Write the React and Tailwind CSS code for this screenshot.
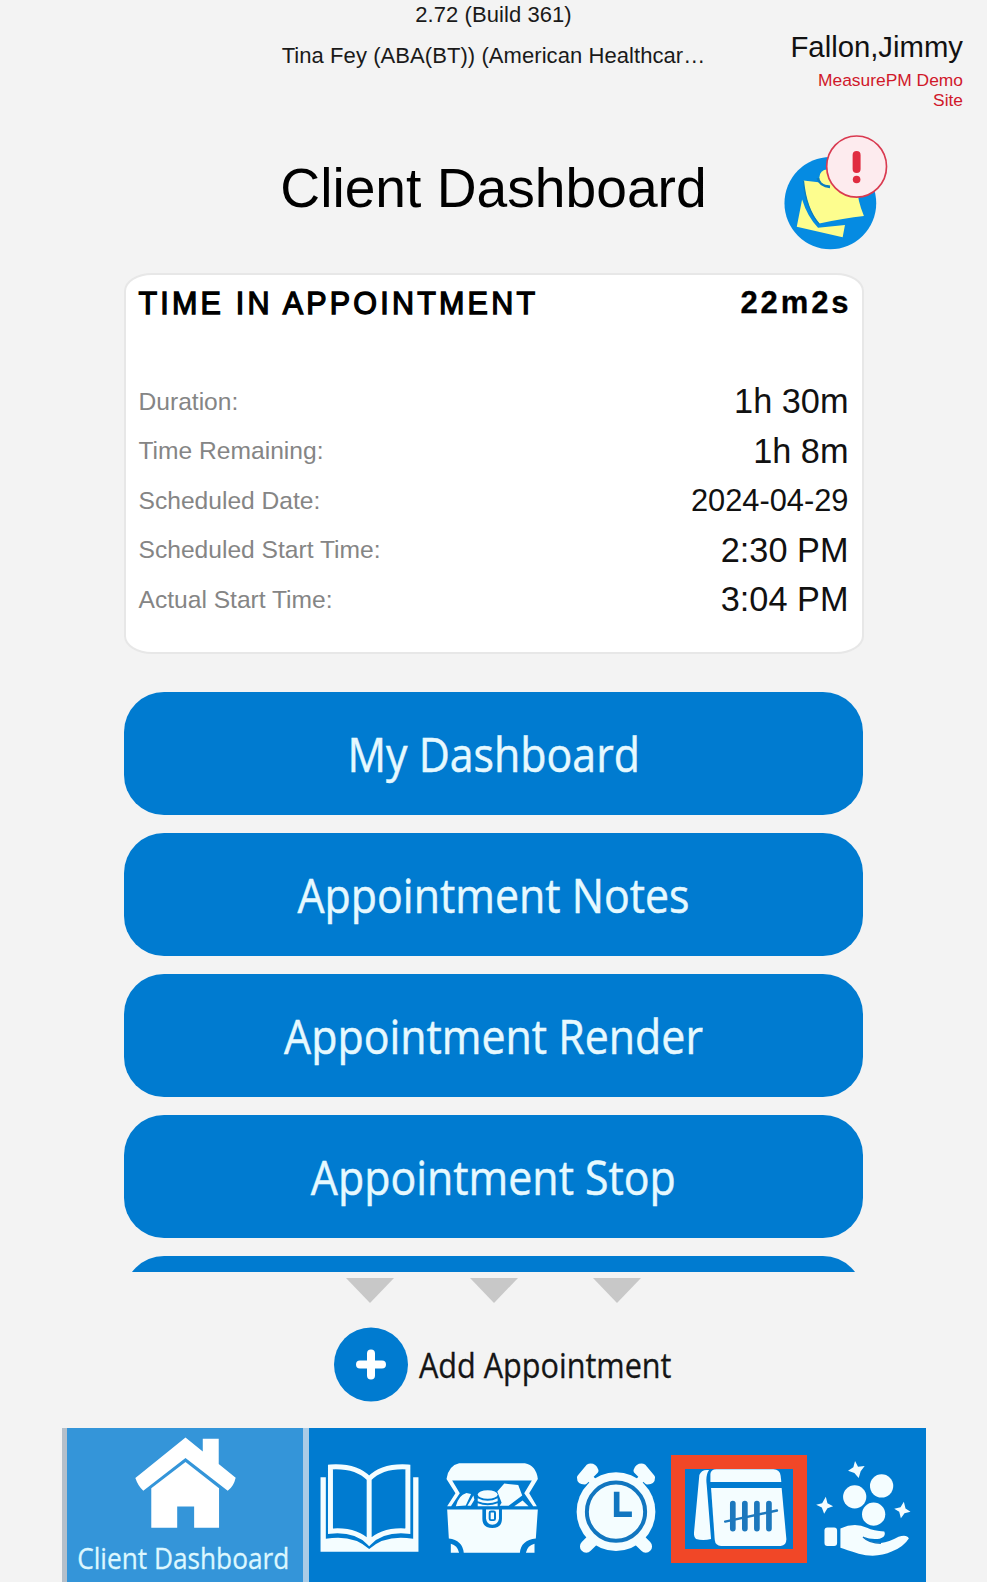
const details = [
  { label: 'Duration:', value: '1h 30m' },
  { label: 'Time Remaining:', value: '1h 8m' },
  { label: 'Scheduled Date:', value: '2024-04-29', small: true },
  { label: 'Scheduled Start Time:', value: '2:30 PM' },
  { label: 'Actual Start Time:', value: '3:04 PM' },
];

const actions = ['My Dashboard', 'Appointment Notes', 'Appointment Render', 'Appointment Stop', ''];

function NotesIcon() {
  return (
    <svg viewBox="70 404 312 346" className="w-[104px] h-[115px]">
      <ellipse cx="209" cy="609" rx="138" ry="139" fill="#058be2" />
      <path d="M124 598 L108 680 L246 712 L253 675 L172 683 Q140 650 124 598Z" fill="#fdfd8e" />
      <path d="M128 541 L290 560 Q290 600 310 648 Q250 655 176 670 Q136 625 128 541Z" fill="#fdfd8e" />
      <path d="M128 541 Q136 628 176 673" fill="none" stroke="#0a7dc0" strokeWidth="4" />
      <path d="M171 534 Q178 558 208 560" fill="none" stroke="#0a7dc0" strokeWidth="8" />
      <circle cx="199" cy="531" r="23" fill="#fdfd8e" />
      <ellipse cx="288" cy="499" rx="90" ry="92" fill="#fdebee" stroke="#d93a50" strokeWidth="5" />
      <rect x="276" y="452" width="24" height="66" rx="12" fill="#e02c40" />
      <circle cx="288" cy="538" r="11.5" fill="#e02c40" />
    </svg>
  );
}

function HouseIcon() {
  return (
    <svg viewBox="252 66 304 276" className="w-[101px] h-[92px]" fill="#fff">
      <path d="M404 67 L456 109 V71 H504 V147 L555 188 Q549 215 531 227 L404 129 L277 227 Q262 215 253 189Z" />
      <path d="M404 141 L505 220 V339 H430 V275 H379 V339 H301 V220Z" />
    </svg>
  );
}

function BookIcon() {
  return (
    <svg viewBox="61 146 298 266" className="w-[99px] h-[88px]">
      <path d="M62 186 H78 V372 Q160 358 209 403 Q258 358 342 372 V186 H358 V411 H62Z" fill="#f4fdff" />
      <path
        d="M92 155 Q170 150 209 191 Q248 150 326 155 V349 Q250 342 209 384 Q168 342 92 349Z M209 191 V384"
        fill="none" stroke="#f4fdff" strokeWidth="15"
      />
    </svg>
  );
}

function ChestIcon() {
  return (
    <svg viewBox="441 142 276 271" className="w-[92px] h-[90px]" fill="#f4fdff">
      <path d="M480 143 H678 Q712 150 717 190 L691 233 L714 272 H703 L676 233 L699 195 H459 L482 233 L456 272 H444 L469 233 L442 190 Q448 150 480 143Z" />
      <path d="M470 272 Q478 239 502 232 L516 235 L500 270Z M505 271 L523 240 L526 253 L515 271Z" />
      <ellipse cx="566" cy="237" rx="30" ry="13" />
      <path d="M536 248 Q566 264 596 248 V257 Q566 270 536 257Z M536 263 Q566 276 596 263 V272 H536Z" />
      <path d="M595 228 L616 204 L658 208 L670 240 L629 271 H602 L608 262Z M646 272 L671 255 L689 272Z" />
      <path d="M444 282 H550 V310 Q550 337 580 338 Q609 337 609 310 V282 H717 L711 369 Q666 374 663 412 H494 Q490 374 449 369Z" />
      <path d="M561 282 H600 V309 Q598 327 580 328 Q563 327 561 309Z" />
      <rect x="572" y="288" width="16" height="26" rx="4" fill="none" stroke="#007bd0" strokeWidth="6" />
      <path d="M455 385 Q475 390 480 412 H455Z M707 385 Q686 390 681 412 H707Z" />
    </svg>
  );
}

function ClockIcon() {
  return (
    <svg viewBox="80 142 240 272" className="w-[80px] h-[90px]">
      <path d="M134 370 L110 394 M266 370 L290 394" stroke="#f4fdff" strokeWidth="38" strokeLinecap="round" />
      <path d="M110 176 L146 214 M290 176 L254 214" stroke="#f4fdff" strokeWidth="22" />
      <path
        d="M92 186 L119 154 Q132 152 137 165 L105 197 Q92 197 92 186Z M308 186 L281 154 Q268 152 263 165 L295 197 Q308 197 308 186Z"
        fill="#f4fdff" stroke="#f4fdff" strokeWidth="20" strokeLinejoin="round"
      />
      <circle cx="200" cy="289" r="119" fill="#f4fdff" />
      <circle cx="200" cy="289" r="88" fill="none" stroke="#1176c0" strokeWidth="12" />
      <path d="M202 229 V297 H248" fill="none" stroke="#1176c0" strokeWidth="17" />
    </svg>
  );
}

function CalendarIcon() {
  return (
    <svg viewBox="433 162 278 230" className="w-[93px] h-[77px]">
      <path d="M449 180 Q455 162 478 165 Q467 180 471 210 L484 371 Q460 377 439 371 Q432 366 433 352Z" fill="#f4fdff" />
      <path d="M482 201 V177 Q483 163 500 163 H670 Q690 164 692 182 L694 201Z" fill="#f4fdff" />
      <path d="M484 219 H695 L709 370 Q710 391 692 392 H514 Q497 391 495 374Z" fill="#f4fdff" />
      <g stroke="#1c78bd" strokeLinecap="round">
        <path d="M549 265 V340 M585 265 V340 M621 265 V340 M657 265 V340" strokeWidth="17" />
        <path d="M526 319 L681 286" strokeWidth="7" />
      </g>
    </svg>
  );
}

function RewardsIcon() {
  return (
    <svg viewBox="229 136 285 286" className="w-[95px] h-[95px]" fill="#f4fdff">
      <circle cx="426" cy="211" r="35" />
      <circle cx="345" cy="244" r="35" />
      <circle cx="402" cy="296" r="35" />
      <path d="M346 136 L355 153 L375 151 L363 167 L357 187 L344 172 L325 165 L341 155Z" />
      <path d="M258 244 L263 263 L280 272 L263 278 L253 295 L246 276 L229 268 L247 263Z" />
      <path d="M493 259 L498 279 L513 289 L495 293 L484 308 L479 289 L464 280 L483 275Z" />
      <rect x="254" y="336" width="38" height="56" rx="9" />
      <path d="M302 339 Q345 320 382 337 Q402 347 434 348 Q441 364 420 370 Q395 374 371 364 Q389 383 424 383 Q448 380 477 364 Q502 356 508 369 Q493 393 458 408 Q410 430 357 415 Q318 403 302 397Z" />
      <path d="M370 365 Q389 384 424 384" fill="none" stroke="#1176c0" strokeWidth="4" />
    </svg>
  );
}

function Header() {
  return (
    <header className="grid grid-cols-[1fr_440px_1fr] h-[120px]">
      <div />
      <div className="text-center text-[22px] leading-[30px] tracking-[0.07px] text-[#1a1a1a] whitespace-nowrap">
        <p>2.72 (Build 361)</p>
        <p className="mt-[11px]">Tina Fey (ABA(BT)) (American Healthcar…</p>
      </div>
      <div className="flex flex-col items-end pt-[29px] pr-6 text-right">
        <p className="text-[29.3px] leading-9 text-[#111]">Fallon,Jimmy</p>
        <p className="mt-[5px] w-[150px] text-[17.4px] leading-5 text-[#d0182a]">MeasurePM Demo Site</p>
      </div>
    </header>
  );
}

function AppointmentCard() {
  return (
    <section className="mx-auto w-[740px] h-[381px] shrink-0 bg-white border-2 border-[#e7e7e7] rounded-[28px/18px] px-[13px] pt-2">
      <div className="flex justify-between leading-10 text-black">
        <h2 className="text-[30.5px] tracking-[3.2px] [-webkit-text-stroke:1.3px_black]">TIME IN APPOINTMENT</h2>
        <span className="text-[31px] font-bold tracking-[2.9px] -mr-[3px] [-webkit-text-stroke:0.3px_black]">22m2s</span>
      </div>
      <div className="mt-[54px]">
        {details.map(({ label, value, small }) => (
          <div key={label} className="flex items-center justify-between h-[49.5px]">
            <span className="pt-px text-[24.6px] text-[#858585]">{label}</span>
            <span className={small ? 'text-[30.8px] text-[#111]' : 'text-[34.3px] text-[#111]'}>{value}</span>
          </div>
        ))}
      </div>
    </section>
  );
}

export default function App() {
  return (
    <div className="flex flex-col w-[987px] h-[1582px] overflow-hidden bg-[#f3f3f3] font-['Liberation_Sans',Arial,sans-serif]">
      <Header />

      <div className="grid grid-cols-[1fr_440px_1fr] h-[153px]">
        <div />
        <h1 className="pt-[38px] text-center text-[55.2px] leading-[60px] text-black whitespace-nowrap">Client Dashboard</h1>
        <div className="pl-[70px] pt-[15px]"><NotesIcon /></div>
      </div>

      <AppointmentCard />

      <div className="mx-auto mt-[38px] w-[739px] h-[580px] shrink-0 overflow-hidden flex flex-col gap-[18px]">
        {actions.map((text, i) => (
          <button key={i} className="flex items-center justify-center w-full h-[123px] shrink-0 rounded-[40px] bg-[#007bd0]">
            <span className="font-['Open_Sans',sans-serif] text-[48px] leading-none text-[#e6f9ff] whitespace-nowrap scale-x-[0.893] [-webkit-text-stroke:0.5px_#e6f9ff]">{text}</span>
          </button>
        ))}
      </div>

      {/* scroll hints */}
      <div className="mt-[6px] flex justify-center gap-[75.5px]">
        {[0, 1, 2].map(i => (
          <svg key={i} viewBox="0 0 48 25" className="w-12 h-[25px]"><path d="M0 0H48L24 25Z" fill="#c8c8c8" /></svg>
        ))}
      </div>

      <button className="mt-6 ml-[334px] flex items-center gap-[11px] h-[75px] w-[350px]">
        <svg viewBox="0 0 74 74" className="w-[74px] h-[75px] shrink-0">
          <circle cx="37" cy="37" r="37" fill="#007bd0" />
          <path d="M37 26V48M26 37H48" stroke="#fff" strokeWidth="8" strokeLinecap="round" />
        </svg>
        <span className="font-['Open_Sans',sans-serif] text-[34px] leading-none text-[#151515] whitespace-nowrap origin-left scale-x-90 [-webkit-text-stroke:0.3px_#151515]">Add Appointment</span>
      </button>

      <nav className="mt-[26px] ml-[62px] flex w-[864px] h-[154px] shrink-0 bg-[#007bd0]">
        <div className="flex flex-col items-center w-[247px] shrink-0 pt-[9px] bg-[#3495d9] border-l-5 border-l-[#b4bfca] border-r-6 border-r-[#a9cbe6]">
          <HouseIcon />
          <span className="mt-[13px] font-['Open_Sans',sans-serif] text-[28.5px] leading-8 text-[#dcf7ff] whitespace-nowrap scale-x-[0.92] -translate-x-[2px] [-webkit-text-stroke:0.3px_#dcf7ff]">Client Dashboard</span>
        </div>
        <div className="flex items-center pt-[6px]">
          <div className="ml-[11px]"><BookIcon /></div>
          <div className="ml-[27px]"><ChestIcon /></div>
          <div className="ml-[38px]"><ClockIcon /></div>
          <div className="ml-[15px] mt-[2px] w-[136px] h-[108px] border-[14px] border-[#f14727] pl-[9px]"><CalendarIcon /></div>
          <div className="ml-[9px]"><RewardsIcon /></div>
        </div>
      </nav>
    </div>
  );
}
